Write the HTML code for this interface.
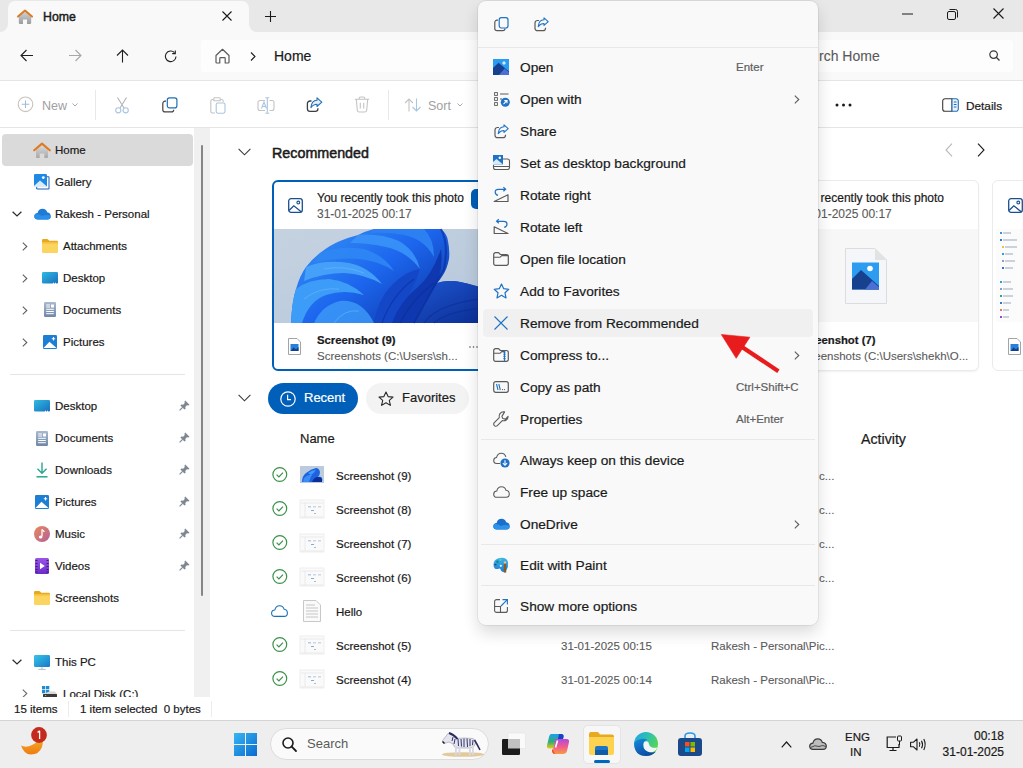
<!DOCTYPE html>
<html><head><meta charset="utf-8">
<style>
*{margin:0;padding:0;box-sizing:border-box}
html,body{width:1023px;height:768px;overflow:hidden;background:#fff;font-family:"Liberation Sans",sans-serif;color:#1a1a1a}
.a{position:absolute}
.t{position:absolute;white-space:nowrap;height:20px;line-height:20px;font-size:11.5px;-webkit-text-stroke:0.2px currentColor}
svg{position:absolute;overflow:visible}
</style></head><body>
<!-- title bar -->
<div class="a" style="left:0;top:0;width:1023px;height:32px;background:#e8e8e8"></div>
<div class="a" style="left:8px;top:1px;width:241px;height:32px;background:#f9f9f9;border-radius:7px 7px 0 0"></div>
<div class="a" style="left:249px;top:24px;width:8px;height:8px;background:#f9f9f9"></div>
<div class="a" style="left:249px;top:24px;width:8px;height:8px;background:#e8e8e8;border-bottom-left-radius:8px"></div>
<div class="a" style="left:0px;top:24px;width:8px;height:8px;background:#f9f9f9"></div>
<div class="a" style="left:0px;top:24px;width:8px;height:8px;background:#e8e8e8;border-bottom-right-radius:8px"></div>
<!-- address row -->
<div class="a" style="left:0;top:32px;width:1023px;height:48px;background:#f9f9f9"></div>
<div class="a" style="left:0;top:80px;width:1023px;height:1px;background:#e5e5e5"></div>
<div class="a" style="left:201px;top:40px;width:400px;height:32px;background:#fdfdfd;border-radius:4px"></div>
<div class="a" style="left:620px;top:40px;width:393px;height:32px;background:#fdfdfd;border-radius:4px"></div>
<!-- command bar -->
<div class="a" style="left:0;top:81px;width:1023px;height:46px;background:#fff"></div>
<div class="a" style="left:0;top:127px;width:1023px;height:1px;background:#e5e5e5"></div>
<!-- nav pane -->
<div class="a" style="left:2px;top:134px;width:191px;height:32px;background:#dadada;border-radius:4px"></div>
<div class="a" style="left:194px;top:128px;width:16px;height:569px;background:#f0f0f0"></div>
<div class="a" style="left:201px;top:145px;width:2px;height:451px;background:#868686;border-radius:1px"></div>
<div class="a" style="left:10px;top:374px;width:175px;height:1px;background:#e5e5e5"></div>
<div class="a" style="left:10px;top:630px;width:175px;height:1px;background:#e5e5e5"></div>


<!-- tab -->
<div class="t" style="left:43px;top:7px;font-size:12.3px;color:#1b1b1b;-webkit-text-stroke:0.45px #1b1b1b">Home</div>
<div class="t" style="left:274px;top:46px;font-size:14px">Home</div>
<div class="t" style="left:819px;top:46px;font-size:14px;color:#5a5a5a;-webkit-text-stroke:0.1px #5a5a5a">rch Home</div>
<!-- cmd bar -->
<div class="t" style="left:42px;top:96px;font-size:12.5px;color:#a0a0a0;-webkit-text-stroke:0">New</div>
<div class="t" style="left:428px;top:96px;font-size:12.5px;color:#a0a0a0;-webkit-text-stroke:0">Sort</div>
<div class="t" style="left:966px;top:96px;font-size:11.8px;color:#1a1a1a">Details</div>
<!-- nav -->
<div class="t" style="left:55px;top:140px">Home</div>
<div class="t" style="left:55px;top:172px">Gallery</div>
<div class="t" style="left:55px;top:204px">Rakesh - Personal</div>
<div class="t" style="left:63px;top:236px">Attachments</div>
<div class="t" style="left:63px;top:268px">Desktop</div>
<div class="t" style="left:63px;top:300px">Documents</div>
<div class="t" style="left:63px;top:332px">Pictures</div>
<div class="t" style="left:55px;top:396px">Desktop</div>
<div class="t" style="left:55px;top:428px">Documents</div>
<div class="t" style="left:55px;top:460px">Downloads</div>
<div class="t" style="left:55px;top:492px">Pictures</div>
<div class="t" style="left:55px;top:524px">Music</div>
<div class="t" style="left:55px;top:556px">Videos</div>
<div class="t" style="left:55px;top:588px">Screenshots</div>
<div class="t" style="left:55px;top:652px">This PC</div>
<!-- status -->
<!-- content -->
<svg style="left:238px;top:148px" width="13" height="8" viewBox="0 0 13 8"><path d="M0.6 0.8L6.5 6.8L12.4 0.8" fill="none" stroke="#3a3a3a" stroke-width="1.1"/></svg>
<svg style="left:945px;top:143px" width="8" height="14" viewBox="0 0 8 14"><path d="M7 0.6L1 7L7 13.4" fill="none" stroke="#b8b8b8" stroke-width="1.1"/></svg>
<svg style="left:977px;top:143px" width="8" height="14" viewBox="0 0 8 14"><path d="M1 0.6L7 7L1 13.4" fill="none" stroke="#1a1a1a" stroke-width="1.1"/></svg>
<!-- card 1 -->
<div class="a" style="left:272px;top:180px;width:227px;height:191px;border:2px solid #005fb8;border-radius:6px;background:#fff;overflow:hidden">
 <svg style="left:0;top:47px" width="225" height="94" viewBox="0 0 225 94">
  <defs><linearGradient id="bgw" x1="0" y1="0" x2="1" y2="1"><stop offset="0" stop-color="#c5d2e0"/><stop offset="1" stop-color="#b6c8dc"/></linearGradient>
  <linearGradient id="bl1" x1="0" y1="0" x2="1" y2="0.6"><stop offset="0" stop-color="#3a96f6"/><stop offset="0.5" stop-color="#1c66ee"/><stop offset="1" stop-color="#0a2f9c"/></linearGradient>
  <linearGradient id="bl3" x1="0" y1="0" x2="1" y2="1"><stop offset="0" stop-color="#1d55d0"/><stop offset="1" stop-color="#0a2a8e"/></linearGradient></defs>
  <rect width="225" height="94" fill="url(#bgw)"/>
  <path d="M17 94Q18 72 22 60Q26 46 32 38Q38 30 46 24Q56 16 66 12Q76 8 84 6Q92 2 100 0H167Q173 5 174 12Q176 22 175 30Q173 40 169 46Q166 51 163 54Q168 52 174 52Q184 52 191 54Q198 56 225 64V94Z" fill="url(#bl1)"/>
  <path d="M163 54Q150 70 140 94H225V64Q195 54 180 52Q170 52 163 54Z" fill="url(#bl3)"/>
  <path d="M22 60Q35 50 55 50Q75 52 90 66Q70 60 52 66Q35 72 28 94H17Q18 72 22 60Z" fill="#3c9cf8"/>
  <path d="M32 38Q50 30 75 34Q95 38 108 55Q90 45 70 44Q50 44 30 52Z" fill="#48a4fa" opacity="0.9"/>
  <path d="M46 24Q65 16 90 20Q110 26 120 42Q105 32 85 30Q65 28 40 34Z" fill="#2f86f4" opacity="0.9"/>
  <path d="M84 6Q105 4 125 12Q142 22 146 40Q132 22 112 18Q95 14 76 14Z" fill="#3a92f8" opacity="0.9"/>
  <path d="M100 0H150Q160 10 160 28Q150 10 130 6Q115 3 96 4Z" fill="#2c80f2"/>
  <path d="M40 94Q48 76 66 72Q88 70 100 94Z" fill="#3b98f7" opacity="0.85"/>
  <path d="M100 94Q104 70 118 56Q132 42 146 40Q140 60 128 76Q120 86 118 94Z" fill="#1446c8"/>
  <path d="M118 94Q126 72 144 58Q158 46 167 20Q170 45 158 62Q148 78 140 94Z" fill="#0f38b0"/>
  <path d="M167 0Q175 15 170 40Q160 58 140 94" fill="none" stroke="#0a2c98" stroke-width="2" opacity="0.6"/>
  <path d="M108 94Q118 66 140 50M126 94Q138 70 160 54M150 94Q165 72 225 68M160 94Q175 80 225 78" fill="none" stroke="#0a2a90" stroke-width="1.2" opacity="0.5"/>
  <path d="M60 94Q70 80 85 82M30 70Q45 58 65 60M50 40Q70 36 90 44" fill="none" stroke="#6ab8ff" stroke-width="1" opacity="0.6"/>
 </svg>
</div>
<svg style="left:288px;top:198px" width="15" height="15" viewBox="0 0 15 15"><rect x="0.7" y="0.7" width="13.6" height="13.6" rx="2.3" fill="none" stroke="#1a4f8f" stroke-width="1.3"/><path d="M1 12.5L5.8 7.8L13.5 14" fill="none" stroke="#1a4f8f" stroke-width="1.3"/><circle cx="10.3" cy="4.5" r="1.4" fill="none" stroke="#1a4f8f" stroke-width="1.1"/></svg>
<div class="t" style="left:317px;top:188px;font-size:12px">You recently took this photo</div>
<div class="t" style="left:317px;top:204px;font-size:12px;color:#5a5a5a;-webkit-text-stroke:0.1px #5a5a5a">31-01-2025 00:17</div>
<div class="a" style="left:471px;top:189px;width:14px;height:20px;background:#005fb8;border-radius:5px"></div>
<svg style="left:288px;top:338px" width="13" height="17" viewBox="0 0 13 17"><path d="M0.5 0.5H9L12.5 4V16.5H0.5Z" fill="#fff" stroke="#9a9a9a" stroke-width="0.9"/><rect x="2.5" y="6" width="8" height="7" fill="#2a7fd6"/><path d="M2.5 13L5.5 9.5L8 11.5L10.5 9V13Z" fill="#0f3f8f"/></svg>
<div class="t" style="left:317px;top:330px;font-size:11.3px;font-weight:bold">Screenshot (9)</div>
<div class="t" style="left:317px;top:346px;font-size:11.5px;color:#5a5a5a;-webkit-text-stroke:0.1px #5a5a5a">Screenshots (C:\Users\sh...</div>
<svg style="left:469px;top:346px" width="9" height="2" viewBox="0 0 9 2"><circle cx="1" cy="1" r="0.8" fill="#555"/><circle cx="4.5" cy="1" r="0.8" fill="#555"/><circle cx="8" cy="1" r="0.8" fill="#555"/></svg>
<!-- card 2 -->
<div class="a" style="left:752px;top:180px;width:227px;height:191px;border:1px solid #ebebeb;border-radius:6px;background:#fff;box-shadow:0 1px 2px rgba(0,0,0,0.06)"></div>
<div class="a" style="left:753px;top:229px;width:225px;height:93px;background:#f7f7f7"></div>
<svg style="left:845px;top:248px" width="42" height="56" viewBox="0 0 42 56"><path d="M0.5 0.5H30L41.5 12V55.5H0.5Z" fill="#f4f6f9" stroke="#dcdcdc" stroke-width="1"/><path d="M30 0.5V12H41.5Z" fill="#e2e2e2"/><rect x="7" y="14.5" width="27" height="27" fill="#2b9cf0"/><path d="M7 41.5V31L16 22L34 38V41.5Z" fill="#17408f"/><path d="M20 41.5L27 33L34 39V41.5Z" fill="#4b6fd4"/><circle cx="25" cy="20.5" r="2.8" fill="#fff"/></svg>
<div class="t" style="left:797px;top:188px;font-size:12px">You recently took this photo</div>
<div class="t" style="left:797px;top:204px;font-size:12px;color:#5a5a5a;-webkit-text-stroke:0.1px #5a5a5a">31-01-2025 00:17</div>
<div class="t" style="left:797px;top:330px;font-size:11.3px;font-weight:bold">Screenshot (7)</div>
<div class="t" style="left:797px;top:346px;font-size:11.5px;color:#5a5a5a;-webkit-text-stroke:0.1px #5a5a5a">Screenshots (C:\Users\shekh\O...</div>
<!-- card 3 -->
<div class="a" style="left:992px;top:180px;width:227px;height:191px;border:1px solid #ebebeb;border-radius:6px;background:#fff"></div>
<svg style="left:1008px;top:198px" width="15" height="15" viewBox="0 0 15 15"><rect x="0.7" y="0.7" width="13.6" height="13.6" rx="2.3" fill="none" stroke="#1a4f8f" stroke-width="1.3"/><path d="M1 12.5L5.8 7.8L13.5 14" fill="none" stroke="#1a4f8f" stroke-width="1.3"/><circle cx="10.3" cy="4.5" r="1.4" fill="none" stroke="#1a4f8f" stroke-width="1.1"/></svg>
<svg style="left:996px;top:229px" width="27" height="93" viewBox="0 0 27 93"><rect width="27" height="93" fill="#fbfbfb"/>
<g fill="#9ab"><rect x="4" y="3" width="2" height="2" fill="#3d8fd8"/><rect x="7" y="3.5" width="8" height="1" /><rect x="4" y="10" width="2" height="2" fill="#2a7ad0"/><rect x="7" y="10.5" width="14" height="1"/><rect x="6" y="17" width="2" height="2" fill="#f2c040"/><rect x="9" y="17.5" width="12" height="1"/><rect x="6" y="24" width="2" height="2" fill="#2aa0d8"/><rect x="9" y="24.5" width="8" height="1"/><rect x="6" y="31" width="2" height="2" fill="#8aa0c0"/><rect x="9" y="31.5" width="10" height="1"/><rect x="6" y="38" width="2" height="2" fill="#2a7ad0"/><rect x="9" y="38.5" width="8" height="1"/>
<rect x="4" y="52" width="2" height="2" fill="#2aa0d8"/><rect x="7" y="52.5" width="8" height="1"/><rect x="4" y="59" width="2" height="2" fill="#8aa0c0"/><rect x="7" y="59.5" width="10" height="1"/><rect x="4" y="66" width="2" height="2" fill="#2aa68f"/><rect x="7" y="66.5" width="10" height="1"/><rect x="4" y="73" width="2" height="2" fill="#2a7ad0"/><rect x="7" y="73.5" width="8" height="1"/><rect x="4" y="80" width="2" height="2" fill="#e07a60"/><rect x="7" y="80.5" width="6" height="1"/><rect x="4" y="87" width="2" height="2" fill="#8a4ae0"/><rect x="7" y="87.5" width="6" height="1"/></g></svg>
<svg style="left:1008px;top:338px" width="13" height="17" viewBox="0 0 13 17"><path d="M0.5 0.5H9L12.5 4V16.5H0.5Z" fill="#fff" stroke="#9a9a9a" stroke-width="0.9"/><rect x="2.5" y="6" width="8" height="7" fill="#2a7fd6"/><path d="M2.5 13L5.5 9.5L8 11.5L10.5 9V13Z" fill="#0f3f8f"/></svg>
<!-- pills -->
<svg style="left:238px;top:394px" width="13" height="8" viewBox="0 0 13 8"><path d="M0.6 0.8L6.5 6.8L12.4 0.8" fill="none" stroke="#3a3a3a" stroke-width="1.1"/></svg>
<div class="a" style="left:268px;top:383px;width:90px;height:31px;background:#005fb8;border-radius:16px"></div>
<svg style="left:280px;top:391px" width="16" height="16" viewBox="0 0 16 16"><circle cx="8" cy="8" r="7.2" fill="none" stroke="#fff" stroke-width="1.2"/><path d="M7.6 3.8V8.6H11" fill="none" stroke="#fff" stroke-width="1.2"/></svg>
<div class="t" style="left:304px;top:388px;font-size:13px;color:#fff">Recent</div>
<div class="a" style="left:366px;top:383px;width:103px;height:31px;background:#f3f3f3;border-radius:16px"></div>
<svg style="left:378px;top:391px" width="16" height="16" viewBox="0 0 16 16"><path d="M8 1L10.1 5.6L15 6.1L11.3 9.4L12.4 14.4L8 11.8L3.6 14.4L4.7 9.4L1 6.1L5.9 5.6Z" fill="none" stroke="#2a2a2a" stroke-width="1.1" stroke-linejoin="round"/></svg>
<div class="t" style="left:402px;top:388px;font-size:13px">Favorites</div>
<svg style="left:272px;top:467px" width="16" height="16" viewBox="0 0 16 16"><circle cx="7.8" cy="7.5" r="6.9" fill="none" stroke="#3a9148" stroke-width="1.2"/><path d="M4.6 7.6L6.9 9.9L11 5.6" fill="none" stroke="#3a9148" stroke-width="1.2"/></svg>
<svg style="left:300px;top:466px" width="24" height="17" viewBox="0 0 24 17"><rect width="24" height="17" fill="#bccbdc"/><path d="M2 16Q2 10 6 7Q11 3 16 2Q19 2 20 6Q20 9 18 11Q21 10 22 12Q23 15 21 16Z" fill="#1f62e0"/><path d="M4 12Q8 8 12 9Q10 12 9 16H3Z" fill="#3a8ef5"/><path d="M12 16Q14 11 18 11Q22 11 22 14V16Z" fill="#0a2e9a"/><path d="M8 7Q12 4 16 4Q14 7 11 9Z" fill="#3f9af8"/></svg>
<svg style="left:272px;top:501px" width="16" height="16" viewBox="0 0 16 16"><circle cx="7.8" cy="7.5" r="6.9" fill="none" stroke="#3a9148" stroke-width="1.2"/><path d="M4.6 7.6L6.9 9.9L11 5.6" fill="none" stroke="#3a9148" stroke-width="1.2"/></svg>
<svg style="left:300px;top:500px" width="24" height="18" viewBox="0 0 24 18"><rect width="24" height="18" fill="#fafafa" stroke="#eee"/><path d="M1 3H23M5 3V17M1 17H23" stroke="#e0e0e0" stroke-width="0.6"/><rect x="8" y="6" width="3" height="1.5" fill="#b8cde8"/><rect x="13" y="6" width="3" height="1.5" fill="#c8d8e8"/><rect x="18" y="6" width="3" height="1.5" fill="#c8d8e8"/><rect x="11" y="10" width="3" height="1" fill="#8aa8d0"/><rect x="14" y="13" width="2" height="1" fill="#aabbd0"/></svg>
<svg style="left:272px;top:535px" width="16" height="16" viewBox="0 0 16 16"><circle cx="7.8" cy="7.5" r="6.9" fill="none" stroke="#3a9148" stroke-width="1.2"/><path d="M4.6 7.6L6.9 9.9L11 5.6" fill="none" stroke="#3a9148" stroke-width="1.2"/></svg>
<svg style="left:300px;top:534px" width="24" height="18" viewBox="0 0 24 18"><rect width="24" height="18" fill="#fafafa" stroke="#eee"/><path d="M1 3H23M5 3V17M1 17H23" stroke="#e0e0e0" stroke-width="0.6"/><rect x="8" y="6" width="3" height="1.5" fill="#b8cde8"/><rect x="13" y="6" width="3" height="1.5" fill="#c8d8e8"/><rect x="18" y="6" width="3" height="1.5" fill="#c8d8e8"/><rect x="11" y="10" width="3" height="1" fill="#8aa8d0"/><rect x="14" y="13" width="2" height="1" fill="#aabbd0"/></svg>
<svg style="left:272px;top:569px" width="16" height="16" viewBox="0 0 16 16"><circle cx="7.8" cy="7.5" r="6.9" fill="none" stroke="#3a9148" stroke-width="1.2"/><path d="M4.6 7.6L6.9 9.9L11 5.6" fill="none" stroke="#3a9148" stroke-width="1.2"/></svg>
<svg style="left:300px;top:568px" width="24" height="18" viewBox="0 0 24 18"><rect width="24" height="18" fill="#fafafa" stroke="#eee"/><path d="M1 3H23M5 3V17M1 17H23" stroke="#e0e0e0" stroke-width="0.6"/><rect x="8" y="6" width="3" height="1.5" fill="#b8cde8"/><rect x="13" y="6" width="3" height="1.5" fill="#c8d8e8"/><rect x="18" y="6" width="3" height="1.5" fill="#c8d8e8"/><rect x="11" y="10" width="3" height="1" fill="#8aa8d0"/><rect x="14" y="13" width="2" height="1" fill="#aabbd0"/></svg>
<svg style="left:271px;top:605px" width="17" height="12" viewBox="0 0 17 12"><path d="M4 11.4Q0.6 11.4 0.6 8.2Q0.6 5.3 3.8 5Q4.7 0.7 8.6 0.7Q12.1 0.7 13.1 4.2Q16.4 4.7 16.4 8Q16.4 11.4 13.2 11.4Z" fill="none" stroke="#1f6fb5" stroke-width="1.1"/></svg>
<svg style="left:303px;top:600px" width="18" height="22" viewBox="0 0 18 22"><path d="M0.5 0.5H13L17.5 5V21.5H0.5Z" fill="#fafafa" stroke="#c8c8c8" stroke-width="1"/><path d="M3 5H12M3 8H15M3 11H15M3 14H15M3 17H15" stroke="#c6c6c6" stroke-width="1"/></svg>
<svg style="left:272px;top:637px" width="16" height="16" viewBox="0 0 16 16"><circle cx="7.8" cy="7.5" r="6.9" fill="none" stroke="#3a9148" stroke-width="1.2"/><path d="M4.6 7.6L6.9 9.9L11 5.6" fill="none" stroke="#3a9148" stroke-width="1.2"/></svg>
<svg style="left:300px;top:636px" width="24" height="18" viewBox="0 0 24 18"><rect width="24" height="18" fill="#fafafa" stroke="#eee"/><path d="M1 3H23M5 3V17M1 17H23" stroke="#e0e0e0" stroke-width="0.6"/><rect x="8" y="6" width="3" height="1.5" fill="#b8cde8"/><rect x="13" y="6" width="3" height="1.5" fill="#c8d8e8"/><rect x="18" y="6" width="3" height="1.5" fill="#c8d8e8"/><rect x="11" y="10" width="3" height="1" fill="#8aa8d0"/><rect x="14" y="13" width="2" height="1" fill="#aabbd0"/></svg>
<svg style="left:272px;top:671px" width="16" height="16" viewBox="0 0 16 16"><circle cx="7.8" cy="7.5" r="6.9" fill="none" stroke="#3a9148" stroke-width="1.2"/><path d="M4.6 7.6L6.9 9.9L11 5.6" fill="none" stroke="#3a9148" stroke-width="1.2"/></svg>
<svg style="left:300px;top:670px" width="24" height="18" viewBox="0 0 24 18"><rect width="24" height="18" fill="#fafafa" stroke="#eee"/><path d="M1 3H23M5 3V17M1 17H23" stroke="#e0e0e0" stroke-width="0.6"/><rect x="8" y="6" width="3" height="1.5" fill="#b8cde8"/><rect x="13" y="6" width="3" height="1.5" fill="#c8d8e8"/><rect x="18" y="6" width="3" height="1.5" fill="#c8d8e8"/><rect x="11" y="10" width="3" height="1" fill="#8aa8d0"/><rect x="14" y="13" width="2" height="1" fill="#aabbd0"/></svg>
<div class="t" style="left:819px;top:466px;color:#5a5a5a;-webkit-text-stroke:0.1px #5a5a5a">c...</div>
<div class="t" style="left:819px;top:500px;color:#5a5a5a;-webkit-text-stroke:0.1px #5a5a5a">c...</div>
<div class="t" style="left:819px;top:534px;color:#5a5a5a;-webkit-text-stroke:0.1px #5a5a5a">c...</div>
<div class="t" style="left:819px;top:568px;color:#5a5a5a;-webkit-text-stroke:0.1px #5a5a5a">c...</div>
<div class="t" style="left:272px;top:143px;font-size:14.3px;-webkit-text-stroke:0.5px #1a1a1a">Recommended</div>
<div class="t" style="left:300px;top:429px;font-size:13px">Name</div>
<div class="t" style="left:861px;top:429px;font-size:14.2px">Activity</div>
<div class="t" style="left:336px;top:466px">Screenshot (9)</div>
<div class="t" style="left:336px;top:500px">Screenshot (8)</div>
<div class="t" style="left:336px;top:534px">Screenshot (7)</div>
<div class="t" style="left:336px;top:568px">Screenshot (6)</div>
<div class="t" style="left:336px;top:602px">Hello</div>
<div class="t" style="left:336px;top:636px">Screenshot (5)</div>
<div class="t" style="left:336px;top:670px">Screenshot (4)</div>
<div class="t" style="left:561px;top:636px;color:#5a5a5a;-webkit-text-stroke:0.1px #5a5a5a">31-01-2025 00:15</div>
<div class="t" style="left:561px;top:670px;color:#5a5a5a;-webkit-text-stroke:0.1px #5a5a5a">31-01-2025 00:14</div>
<div class="t" style="left:711px;top:636px;color:#5a5a5a;-webkit-text-stroke:0.1px #5a5a5a">Rakesh - Personal\Pic...</div>
<div class="t" style="left:711px;top:670px;color:#5a5a5a;-webkit-text-stroke:0.1px #5a5a5a">Rakesh - Personal\Pic...</div>


<!-- title icons -->
<svg style="left:17px;top:9px" width="16" height="16" viewBox="0 0 16 16">
 <defs><linearGradient id="hg" x1="0" y1="0" x2="0" y2="1"><stop offset="0" stop-color="#cfd6dc"/><stop offset="1" stop-color="#9c9c9c"/></linearGradient></defs>
 <path d="M1.8 7L8 2L14.2 7V13.8Q14.2 15 13 15H10V10.5H6V15H3Q1.8 15 1.8 13.8Z" fill="url(#hg)"/>
 <path d="M1 7.6L8 1.6L15 7.6" fill="none" stroke="#e07a1f" stroke-width="2" stroke-linecap="round" stroke-linejoin="round"/>
</svg>
<svg style="left:222px;top:11px" width="10" height="10" viewBox="0 0 10 10"><path d="M0.5 0.5L9.5 9.5M9.5 0.5L0.5 9.5" stroke="#1a1a1a" stroke-width="1.1"/></svg>
<svg style="left:265px;top:11px" width="11" height="11" viewBox="0 0 11 11"><path d="M5.5 0V11M0 5.5H11" stroke="#1a1a1a" stroke-width="1.1"/></svg>
<svg style="left:902px;top:13px" width="11" height="2" viewBox="0 0 11 2"><path d="M0 1H11" stroke="#1a1a1a" stroke-width="1"/></svg>
<svg style="left:947px;top:9px" width="11" height="11" viewBox="0 0 11 11"><rect x="0.5" y="2.5" width="8" height="8" rx="1.5" fill="none" stroke="#1a1a1a"/><path d="M2.5 0.5H8.5A2 2 0 0 1 10.5 2.5V8.5" fill="none" stroke="#1a1a1a"/></svg>
<svg style="left:993px;top:8px" width="11" height="11" viewBox="0 0 11 11"><path d="M0.5 0.5L10.5 10.5M10.5 0.5L0.5 10.5" stroke="#1a1a1a" stroke-width="1.1"/></svg>
<!-- nav arrows -->
<svg style="left:20px;top:49px" width="14" height="13" viewBox="0 0 14 13"><path d="M13 6.5H1.2M6.5 1L1 6.5L6.5 12" fill="none" stroke="#1f1f1f" stroke-width="1.1"/></svg>
<svg style="left:68px;top:49px" width="14" height="13" viewBox="0 0 14 13"><path d="M1 6.5H12.8M7.5 1L13 6.5L7.5 12" fill="none" stroke="#a8a8a8" stroke-width="1.1"/></svg>
<svg style="left:116px;top:49px" width="13" height="14" viewBox="0 0 13 14"><path d="M6.5 13.5V1.2M1 6.5L6.5 1L12 6.5" fill="none" stroke="#1f1f1f" stroke-width="1.1"/></svg>
<svg style="left:164px;top:50px" width="14" height="13" viewBox="0 0 14 13"><path d="M12 6.5A5.3 5.3 0 1 1 10.5 2.6" fill="none" stroke="#1f1f1f" stroke-width="1.1"/><path d="M11.3 0.5V3.6H8.2" fill="none" stroke="#1f1f1f" stroke-width="1.1"/></svg>
<svg style="left:215px;top:48px" width="15" height="16" viewBox="0 0 15 16"><path d="M1 7.5L7.5 1.3L14 7.5V14.2Q14 15 13.2 15H10.2V10.5Q10.2 9.7 9.4 9.7H5.6Q4.8 9.7 4.8 10.5V15H1.8Q1 15 1 14.2Z" fill="none" stroke="#5a5a5a" stroke-width="1.2" stroke-linejoin="round"/></svg>
<svg style="left:250px;top:52px" width="6" height="9" viewBox="0 0 6 9"><path d="M1 0.5L5 4.5L1 8.5" fill="none" stroke="#1f1f1f" stroke-width="1.1"/></svg>
<svg style="left:989px;top:50px" width="11" height="11" viewBox="0 0 11 11"><circle cx="4.6" cy="4.6" r="3.8" fill="none" stroke="#3a3a3a" stroke-width="1.2"/><path d="M7.3 7.3L10.5 10.5" stroke="#3a3a3a" stroke-width="1.3"/></svg>


<!-- command bar icons -->
<svg style="left:17px;top:96px" width="17" height="17" viewBox="0 0 17 17"><circle cx="8.5" cy="8.3" r="7.3" fill="none" stroke="#c9c2bb" stroke-width="1.1"/><path d="M8.5 4.5V12.1M4.7 8.3H12.3" stroke="#9fbbd6" stroke-width="1.1"/></svg>
<svg style="left:72px;top:103px" width="6" height="4" viewBox="0 0 6 4"><path d="M0.5 0.5L3 3L5.5 0.5" fill="none" stroke="#a0a0a0" stroke-width="0.9"/></svg>
<div class="a" style="left:95px;top:90px;width:1px;height:30px;background:#e8e8e8"></div>
<svg style="left:114px;top:97px" width="16" height="17" viewBox="0 0 16 17"><path d="M3.5 0.5L10 11M12.5 0.5L6 11" stroke="#b3b3b3" stroke-width="1.1"/><circle cx="4.3" cy="13.3" r="2.6" fill="#fff" stroke="#a9c5e0" stroke-width="1.1"/><circle cx="11.7" cy="13.3" r="2.6" fill="#fff" stroke="#a9c5e0" stroke-width="1.1"/></svg>
<svg style="left:162px;top:97px" width="16" height="16" viewBox="0 0 16 16"><path d="M4 4.2H3A2.2 2.2 0 0 0 0.8 6.4V12.7A2.2 2.2 0 0 0 3 14.9H9.5A2.2 2.2 0 0 0 11.7 12.7" fill="none" stroke="#424242" stroke-width="1.2"/><rect x="5.3" y="0.9" width="9.6" height="10" rx="2.2" fill="#fff" stroke="#1f6fb5" stroke-width="1.2"/></svg>
<svg style="left:210px;top:97px" width="16" height="17" viewBox="0 0 16 17"><path d="M3.5 2.5H2.5A1.7 1.7 0 0 0 0.8 4.2V14.3A1.7 1.7 0 0 0 2.5 16H5" fill="none" stroke="#c4c4c4" stroke-width="1.1"/><path d="M3.8 3.8V1.6Q3.8 0.8 4.6 0.8H9.4Q10.2 0.8 10.2 1.6V3.8Z" fill="none" stroke="#c4c4c4" stroke-width="1.1"/><path d="M10.5 2.5H11.5A1.7 1.7 0 0 1 13.2 4.2V5" fill="none" stroke="#c4c4c4" stroke-width="1.1"/><rect x="6.2" y="6" width="8.8" height="10.2" rx="1.6" fill="#fff" stroke="#a9c5e0" stroke-width="1.1"/></svg>
<svg style="left:257px;top:97px" width="18" height="17" viewBox="0 0 18 17"><path d="M8 3.5H3A2 2 0 0 0 1 5.5V11.5A2 2 0 0 0 3 13.5H8M12.5 3.5H15A2 2 0 0 1 17 5.5V11.5A2 2 0 0 1 15 13.5H12.5" fill="none" stroke="#c4c4c4" stroke-width="1.1"/><path d="M4.5 11.5L7 5L9.5 11.5M5.3 9.5H8.7" fill="none" stroke="#a9c5e0" stroke-width="1.1"/><path d="M10.3 0.8V16.2M8.3 0.8H12.3M8.3 16.2H12.3" fill="none" stroke="#a9c5e0" stroke-width="1.1"/></svg>
<svg style="left:306px;top:97px" width="17" height="16" viewBox="0 0 17 16"><path d="M5.5 4H4A2.6 2.6 0 0 0 1.4 6.6V11.8A2.6 2.6 0 0 0 4 14.4H9.3A2.6 2.6 0 0 0 11.9 11.8V11.2" fill="none" stroke="#3f3f3f" stroke-width="1.3"/><path d="M11 0.9L15.8 5.2L11 9.5V7.3Q7.2 7.3 4.9 10.6Q5.6 3.2 11 3.2Z" fill="#e4eefa" stroke="#1f6fb5" stroke-width="1.1" stroke-linejoin="round"/></svg>
<svg style="left:354px;top:96px" width="16" height="17" viewBox="0 0 16 17"><path d="M0.8 3.3H15.2M5.3 3.3V2.2Q5.3 1 6.5 1H9.5Q10.7 1 10.7 2.2V3.3M2.3 3.3L3.3 14.2Q3.5 16 5.3 16H10.7Q12.5 16 12.7 14.2L13.7 3.3M6.3 6.8V12.5M9.7 6.8V12.5" fill="none" stroke="#c4c4c4" stroke-width="1.1"/></svg>
<div class="a" style="left:388px;top:90px;width:1px;height:30px;background:#e8e8e8"></div>
<svg style="left:404px;top:98px" width="18" height="14" viewBox="0 0 18 14"><path d="M5 13.5V1M1 5L5 1L9 5" fill="none" stroke="#c4c4c4" stroke-width="1.1"/><path d="M12.5 0.5V13M8.5 9L12.5 13L16.5 9" fill="none" stroke="#a9c5e0" stroke-width="1.1"/></svg>
<svg style="left:457px;top:103px" width="6" height="4" viewBox="0 0 6 4"><path d="M0.5 0.5L3 3L5.5 0.5" fill="none" stroke="#a0a0a0" stroke-width="0.9"/></svg>
<svg style="left:835px;top:103px" width="17" height="4" viewBox="0 0 17 4"><circle cx="2" cy="2" r="1.5" fill="#1a1a1a"/><circle cx="8.5" cy="2" r="1.5" fill="#1a1a1a"/><circle cx="15" cy="2" r="1.5" fill="#1a1a1a"/></svg>
<svg style="left:942px;top:98px" width="17" height="14" viewBox="0 0 17 14"><path d="M10 0.7H3A2.3 2.3 0 0 0 0.7 3V11A2.3 2.3 0 0 0 3 13.3H10Z" fill="none" stroke="#3a3a3a" stroke-width="1.1"/><path d="M10 0.7H14A2.3 2.3 0 0 1 16.3 3V11A2.3 2.3 0 0 1 14 13.3H10Z" fill="#eaf2fb" stroke="#1f6fb5" stroke-width="1.1"/><path d="M11.8 4H14.5M11.8 6.5H14.5M11.8 9H14.5" stroke="#1f6fb5" stroke-width="1"/></svg>

<!-- nav icons -->
<svg style="left:33px;top:142px" width="18" height="17" viewBox="0 0 18 17"><defs><linearGradient id="hg2" x1="0" y1="0" x2="0" y2="1"><stop offset="0" stop-color="#dcdcdc"/><stop offset="1" stop-color="#a8a8a8"/></linearGradient></defs><path d="M3 7.5L9 2.5L15 7.5V15.2Q15 16 14.2 16H11.3V11.5H6.7V16H3.8Q3 16 3 15.2Z" fill="url(#hg2)"/><path d="M1.2 8.3L9 1.6L16.8 8.3" fill="none" stroke="#e07a20" stroke-width="2.1" stroke-linecap="round" stroke-linejoin="round"/></svg>
<svg style="left:34px;top:174px" width="16" height="16" viewBox="0 0 16 16"><rect x="2.2" y="2.2" width="13.3" height="13.3" rx="1.2" fill="#1b5fb0"/><rect x="3.2" y="3.2" width="11.3" height="11.3" fill="#fff"/><rect x="0" y="0" width="13" height="13" rx="1.3" fill="#1e88e5"/><path d="M0 12L6 6.5L13 12.5V13H0Z" fill="#d9ecfb"/><circle cx="9.3" cy="3.6" r="1.4" fill="#fff"/></svg>
<svg style="left:12px;top:211px" width="10" height="6" viewBox="0 0 10 6"><path d="M0.6 0.8L5 5L9.4 0.8" fill="none" stroke="#2a2a2a" stroke-width="1.2"/></svg>
<svg style="left:34px;top:208px" width="17" height="12" viewBox="0 0 17 12"><path d="M4 11.5Q0.3 11.5 0.3 8.3Q0.3 5.3 3.6 5Q4.6 0.8 8.6 0.8Q12.2 0.8 13.2 4.3Q16.7 4.8 16.7 8.2Q16.7 11.5 13.3 11.5Z" fill="#1d7bd6"/><path d="M4 11.5Q0.3 11.5 0.3 8.3Q0.3 6.8 1.5 6Q5 5.5 8 8Q11 6.5 16.5 7.5Q16.7 8 16.7 8.2Q16.7 11.5 13.3 11.5Z" fill="#2b8ee8"/></svg>
<svg style="left:22px;top:242px" width="6" height="9" viewBox="0 0 6 9"><path d="M0.8 0.6L4.8 4.5L0.8 8.4" fill="none" stroke="#5f5f5f" stroke-width="1.1"/></svg>
<svg style="left:22px;top:274px" width="6" height="9" viewBox="0 0 6 9"><path d="M0.8 0.6L4.8 4.5L0.8 8.4" fill="none" stroke="#5f5f5f" stroke-width="1.1"/></svg>
<svg style="left:22px;top:306px" width="6" height="9" viewBox="0 0 6 9"><path d="M0.8 0.6L4.8 4.5L0.8 8.4" fill="none" stroke="#5f5f5f" stroke-width="1.1"/></svg>
<svg style="left:22px;top:338px" width="6" height="9" viewBox="0 0 6 9"><path d="M0.8 0.6L4.8 4.5L0.8 8.4" fill="none" stroke="#5f5f5f" stroke-width="1.1"/></svg>
<svg style="left:42px;top:239px" width="16" height="14" viewBox="0 0 16 14"><path d="M0 1.2Q0 0 1.2 0H5.5L7.3 1.8H14.8Q16 1.8 16 3V4H0Z" fill="#e8a820"/><path d="M0 3.6H16V12.8Q16 14 14.8 14H1.2Q0 14 0 12.8Z" fill="#fcd460"/><path d="M0 3.6H16V5H0Z" fill="#f8c744"/></svg>
<svg style="left:42px;top:272px" width="16" height="12" viewBox="0 0 16 12"><defs><linearGradient id="dg272" x1="0" y1="0" x2="1" y2="1"><stop offset="0" stop-color="#2ebbe0"/><stop offset="1" stop-color="#1a6fc0"/></linearGradient></defs><rect x="0" y="0" width="16" height="11.5" rx="1.3" fill="url(#dg272)"/><rect x="11" y="10.7" width="1" height="1.3" fill="#fff"/><rect x="13" y="10.7" width="1" height="1.3" fill="#fff"/></svg>
<svg style="left:44px;top:302px" width="12" height="15" viewBox="0 0 12 15"><defs><linearGradient id="og302" x1="0" y1="0" x2="0" y2="1"><stop offset="0" stop-color="#a9b9d0"/><stop offset="1" stop-color="#6f87a8"/></linearGradient></defs><rect x="0" y="0" width="12" height="15" rx="1.3" fill="url(#og302)"/><path d="M2.2 3H6M2.2 5H6M2.2 7.3H9.8M2.2 9.5H9.8M2.2 11.7H9.8" stroke="#fff" stroke-width="1"/><rect x="7" y="2.5" width="3" height="3" fill="#fff"/></svg>
<svg style="left:43px;top:335px" width="14" height="14" viewBox="0 0 14 14"><rect x="0" y="0" width="14" height="14" rx="1.3" fill="#1d7fd4"/><path d="M0.5 13L6.5 6.8L13.5 13Z" fill="#fff"/><path d="M10.5 2V5.4M8.8 3.7H12.2" stroke="#fff" stroke-width="1.1"/></svg>
<svg style="left:34px;top:400px" width="16" height="12" viewBox="0 0 16 12"><defs><linearGradient id="dg400" x1="0" y1="0" x2="1" y2="1"><stop offset="0" stop-color="#2ebbe0"/><stop offset="1" stop-color="#1a6fc0"/></linearGradient></defs><rect x="0" y="0" width="16" height="11.5" rx="1.3" fill="url(#dg400)"/><rect x="11" y="10.7" width="1" height="1.3" fill="#fff"/><rect x="13" y="10.7" width="1" height="1.3" fill="#fff"/></svg>
<svg style="left:36px;top:431px" width="12" height="15" viewBox="0 0 12 15"><defs><linearGradient id="og431" x1="0" y1="0" x2="0" y2="1"><stop offset="0" stop-color="#a9b9d0"/><stop offset="1" stop-color="#6f87a8"/></linearGradient></defs><rect x="0" y="0" width="12" height="15" rx="1.3" fill="url(#og431)"/><path d="M2.2 3H6M2.2 5H6M2.2 7.3H9.8M2.2 9.5H9.8M2.2 11.7H9.8" stroke="#fff" stroke-width="1"/><rect x="7" y="2.5" width="3" height="3" fill="#fff"/></svg>
<svg style="left:36px;top:462px" width="12" height="16" viewBox="0 0 12 16"><path d="M6 0.5V11M1.5 6.7L6 11.2L10.5 6.7" fill="none" stroke="#2aa68f" stroke-width="1.4"/><path d="M0.5 14.8H11.5" stroke="#2aa68f" stroke-width="1.5"/></svg>
<svg style="left:35px;top:495px" width="14" height="14" viewBox="0 0 14 14"><rect x="0" y="0" width="14" height="14" rx="1.3" fill="#1d7fd4"/><path d="M0.5 13L6.5 6.8L13.5 13Z" fill="#fff"/><path d="M10.5 2V5.4M8.8 3.7H12.2" stroke="#fff" stroke-width="1.1"/></svg>
<svg style="left:34px;top:526px" width="16" height="16" viewBox="0 0 16 16"><defs><linearGradient id="mg" x1="0" y1="0" x2="1" y2="1"><stop offset="0" stop-color="#e98a5a"/><stop offset="1" stop-color="#b45e9a"/></linearGradient></defs><circle cx="8" cy="8" r="8" fill="url(#mg)"/><path d="M8 3.5V10.6" stroke="#fff" stroke-width="1.3"/><ellipse cx="6.6" cy="10.9" rx="1.8" ry="1.5" fill="#fff"/><path d="M8 3.5Q9.5 4.5 10.3 6" fill="none" stroke="#fff" stroke-width="1.2"/></svg>
<svg style="left:35px;top:558px" width="14" height="16" viewBox="0 0 14 16"><defs><linearGradient id="vg" x1="0" y1="0" x2="0" y2="1"><stop offset="0" stop-color="#9a55e6"/><stop offset="1" stop-color="#6a2cc8"/></linearGradient></defs><rect x="0" y="0" width="14" height="16" rx="1.5" fill="url(#vg)"/><path d="M0.5 2.5H2.5M0.5 5.5H2.5M0.5 8.5H2.5M0.5 11.5H2.5M0.5 14H2.5M11.5 2.5H13.5M11.5 5.5H13.5M11.5 8.5H13.5M11.5 11.5H13.5M11.5 14H13.5" stroke="#3b1a7a" stroke-width="1.2"/><path d="M5 4.8L9.8 8L5 11.2Z" fill="#fff"/></svg>
<svg style="left:34px;top:591px" width="16" height="14" viewBox="0 0 16 14"><path d="M0 1.2Q0 0 1.2 0H5.5L7.3 1.8H14.8Q16 1.8 16 3V4H0Z" fill="#e8a820"/><path d="M0 3.6H16V12.8Q16 14 14.8 14H1.2Q0 14 0 12.8Z" fill="#fcd460"/><path d="M0 3.6H16V5H0Z" fill="#f8c744"/></svg>
<svg style="left:179px;top:400px" width="11" height="11" viewBox="0 0 11 11"><path d="M6.2 0.5L10.5 4.8L9.3 5.6L7.9 5.2L6.3 6.9L6.6 8.8L5.5 9.6L1.4 5.5L2.2 4.4L4.1 4.7L5.8 3.1L5.4 1.7Z" fill="#7c8794"/><path d="M3.6 7.4L0.6 10.4" stroke="#7c8794" stroke-width="1.2"/></svg>
<svg style="left:179px;top:432px" width="11" height="11" viewBox="0 0 11 11"><path d="M6.2 0.5L10.5 4.8L9.3 5.6L7.9 5.2L6.3 6.9L6.6 8.8L5.5 9.6L1.4 5.5L2.2 4.4L4.1 4.7L5.8 3.1L5.4 1.7Z" fill="#7c8794"/><path d="M3.6 7.4L0.6 10.4" stroke="#7c8794" stroke-width="1.2"/></svg>
<svg style="left:179px;top:464px" width="11" height="11" viewBox="0 0 11 11"><path d="M6.2 0.5L10.5 4.8L9.3 5.6L7.9 5.2L6.3 6.9L6.6 8.8L5.5 9.6L1.4 5.5L2.2 4.4L4.1 4.7L5.8 3.1L5.4 1.7Z" fill="#7c8794"/><path d="M3.6 7.4L0.6 10.4" stroke="#7c8794" stroke-width="1.2"/></svg>
<svg style="left:179px;top:496px" width="11" height="11" viewBox="0 0 11 11"><path d="M6.2 0.5L10.5 4.8L9.3 5.6L7.9 5.2L6.3 6.9L6.6 8.8L5.5 9.6L1.4 5.5L2.2 4.4L4.1 4.7L5.8 3.1L5.4 1.7Z" fill="#7c8794"/><path d="M3.6 7.4L0.6 10.4" stroke="#7c8794" stroke-width="1.2"/></svg>
<svg style="left:179px;top:528px" width="11" height="11" viewBox="0 0 11 11"><path d="M6.2 0.5L10.5 4.8L9.3 5.6L7.9 5.2L6.3 6.9L6.6 8.8L5.5 9.6L1.4 5.5L2.2 4.4L4.1 4.7L5.8 3.1L5.4 1.7Z" fill="#7c8794"/><path d="M3.6 7.4L0.6 10.4" stroke="#7c8794" stroke-width="1.2"/></svg>
<svg style="left:179px;top:560px" width="11" height="11" viewBox="0 0 11 11"><path d="M6.2 0.5L10.5 4.8L9.3 5.6L7.9 5.2L6.3 6.9L6.6 8.8L5.5 9.6L1.4 5.5L2.2 4.4L4.1 4.7L5.8 3.1L5.4 1.7Z" fill="#7c8794"/><path d="M3.6 7.4L0.6 10.4" stroke="#7c8794" stroke-width="1.2"/></svg>
<svg style="left:12px;top:659px" width="10" height="6" viewBox="0 0 10 6"><path d="M0.6 0.8L5 5L9.4 0.8" fill="none" stroke="#2a2a2a" stroke-width="1.2"/></svg>
<svg style="left:34px;top:655px" width="16" height="15" viewBox="0 0 16 15"><defs><linearGradient id="pcg" x1="0" y1="0" x2="1" y2="1"><stop offset="0" stop-color="#36c6e6"/><stop offset="1" stop-color="#1878c8"/></linearGradient></defs><rect x="0" y="0" width="16" height="12" rx="1.3" fill="url(#pcg)"/><path d="M8 12V14.2M4.3 14.4H11.7" stroke="#a8b4c0" stroke-width="0.9"/></svg>
<svg style="left:22px;top:689px" width="6" height="9" viewBox="0 0 6 9"><path d="M0.8 0.6L4.8 4.5L0.8 8.4" fill="none" stroke="#6a6a6a" stroke-width="1.1"/></svg>
<svg style="left:42px;top:686px" width="16" height="11" viewBox="0 0 16 11"><rect x="0" y="0" width="3.3" height="3.3" fill="#1f8ad6"/><rect x="4" y="0" width="3.3" height="3.3" fill="#1f8ad6"/><rect x="0" y="4" width="3.3" height="3.3" fill="#1f8ad6"/><rect x="4" y="4" width="3.3" height="3.3" fill="#1f8ad6"/><path d="M7.5 5.5H13L15 8H1Z" fill="#d8d8d8"/><rect x="1" y="8" width="14" height="3" rx="0.5" fill="#3a3a3a"/><rect x="3" y="9" width="1.2" height="1" fill="#6cd46c"/></svg>
<div class="t" style="left:63px;top:684px">Local Disk (C:)</div>

<!-- context menu -->
<div class="a" style="left:478px;top:1px;width:340px;height:624px;background:#f9f9f9;border-radius:8px;box-shadow:0 0 0 1px rgba(0,0,0,0.06),0 8px 16px rgba(0,0,0,0.14)"></div>
<div class="a" style="left:478px;top:47px;width:340px;height:1px;background:#e8e8e8"></div>
<div class="a" style="left:481px;top:439px;width:334px;height:1px;background:#e8e8e8"></div>
<div class="a" style="left:481px;top:544px;width:334px;height:1px;background:#e8e8e8"></div>
<div class="a" style="left:481px;top:585px;width:334px;height:1px;background:#e8e8e8"></div>
<div class="a" style="left:483px;top:309px;width:330px;height:28px;background:#f0f0f0;border-radius:4px"></div>
<div class="t" style="left:520px;top:58px;font-size:13.7px">Open</div>
<div class="t" style="left:520px;top:90px;font-size:13.7px">Open with</div>
<div class="t" style="left:520px;top:122px;font-size:13.7px">Share</div>
<div class="t" style="left:520px;top:154px;font-size:13.7px">Set as desktop background</div>
<div class="t" style="left:520px;top:186px;font-size:13.7px">Rotate right</div>
<div class="t" style="left:520px;top:218px;font-size:13.7px">Rotate left</div>
<div class="t" style="left:520px;top:250px;font-size:13.7px">Open file location</div>
<div class="t" style="left:520px;top:282px;font-size:13.7px">Add to Favorites</div>
<div class="t" style="left:520px;top:314px;font-size:13.7px">Remove from Recommended</div>
<div class="t" style="left:520px;top:346px;font-size:13.7px">Compress to...</div>
<div class="t" style="left:520px;top:378px;font-size:13.7px">Copy as path</div>
<div class="t" style="left:520px;top:410px;font-size:13.7px">Properties</div>
<div class="t" style="left:520px;top:451px;font-size:13.7px">Always keep on this device</div>
<div class="t" style="left:520px;top:483px;font-size:13.7px">Free up space</div>
<div class="t" style="left:520px;top:515px;font-size:13.7px">OneDrive</div>
<div class="t" style="left:520px;top:556px;font-size:13.7px">Edit with Paint</div>
<div class="t" style="left:520px;top:597px;font-size:13.7px">Show more options</div>
<div class="t" style="left:736px;top:57px;font-size:11.5px;color:#5f5f5f">Enter</div>
<div class="t" style="left:736px;top:377px;font-size:11.5px;color:#5f5f5f">Ctrl+Shift+C</div>
<div class="t" style="left:736px;top:409px;font-size:11.5px;color:#5f5f5f">Alt+Enter</div>
<svg style="left:794px;top:95px" width="6" height="9" viewBox="0 0 6 9"><path d="M0.8 0.6L4.8 4.5L0.8 8.4" fill="none" stroke="#5a5a5a" stroke-width="1.1"/></svg>
<svg style="left:794px;top:351px" width="6" height="9" viewBox="0 0 6 9"><path d="M0.8 0.6L4.8 4.5L0.8 8.4" fill="none" stroke="#5a5a5a" stroke-width="1.1"/></svg>
<svg style="left:794px;top:520px" width="6" height="9" viewBox="0 0 6 9"><path d="M0.8 0.6L4.8 4.5L0.8 8.4" fill="none" stroke="#5a5a5a" stroke-width="1.1"/></svg>
<svg style="left:494px;top:17px" width="15" height="14" viewBox="0 0 15 14"><path d="M4 3.2H3A2.2 2.2 0 0 0 0.8 5.4V11.5A2.2 2.2 0 0 0 3 13.7H8.8A2.2 2.2 0 0 0 11 11.5" fill="none" stroke="#5a5a5a" stroke-width="1.2"/><rect x="5.2" y="0.7" width="8.8" height="10.3" rx="2.2" fill="none" stroke="#1f72c4" stroke-width="1.2"/></svg>
<svg style="left:534px;top:17px" width="15" height="14" viewBox="0 0 15 14"><path d="M5 3.5H3.5A2.5 2.5 0 0 0 1 6V11.2A2.5 2.5 0 0 0 3.5 13.7H9A2.5 2.5 0 0 0 11.5 11.2V10.8" fill="none" stroke="#5a5a5a" stroke-width="1.2"/><path d="M10 0.8L14.2 4.6L10 8.4V6.5Q6.6 6.5 4.2 9.6Q4.9 2.8 10 2.8Z" fill="none" stroke="#1f72c4" stroke-width="1.1" stroke-linejoin="round"/></svg>
<svg style="left:493px;top:59px" width="16" height="16" viewBox="0 0 16 16"><rect width="16" height="16" fill="#2b9cf0"/><path d="M0 16V9L5.5 3.8L16 12.5V16Z" fill="#17408f"/><path d="M6 16L11.5 9.5L16 13.2V16Z" fill="#4b6fd4"/><path d="M11 2.2V5.8M9.2 4H12.8" stroke="#fff" stroke-width="1.1"/></svg>
<svg style="left:494px;top:92px" width="16" height="15" viewBox="0 0 16 15"><rect x="0.6" y="0.6" width="2.8" height="2.8" fill="none" stroke="#5a5a5a" stroke-width="0.9"/><rect x="0.6" y="5.6" width="2.8" height="2.8" fill="none" stroke="#5a5a5a" stroke-width="0.9"/><rect x="0.6" y="10.6" width="2.8" height="2.8" fill="none" stroke="#5a5a5a" stroke-width="0.9"/><path d="M6 2H14.5M6 7H8" stroke="#5a5a5a" stroke-width="1"/><circle cx="11.3" cy="10.3" r="4.5" fill="#1f72c4"/><path d="M9.5 12.1L12.9 8.7M10.3 8.6H13V11.3" fill="none" stroke="#fff" stroke-width="1.1"/></svg>
<svg style="left:494px;top:124px" width="16" height="14" viewBox="0 0 16 14"><path d="M5 3.5H3.5A2.5 2.5 0 0 0 1 6V11.2A2.5 2.5 0 0 0 3.5 13.7H9A2.5 2.5 0 0 0 11.5 11.2V10.8" fill="none" stroke="#5a5a5a" stroke-width="1.2"/><path d="M10 0.8L14.2 4.6L10 8.4V6.5Q6.6 6.5 4.2 9.6Q4.9 2.8 10 2.8Z" fill="none" stroke="#1f72c4" stroke-width="1.1" stroke-linejoin="round"/></svg>
<svg style="left:493px;top:155px" width="17" height="15" viewBox="0 0 17 15"><path d="M10 4H14.5A2 2 0 0 1 16.5 6V12.5A2 2 0 0 1 14.5 14.5H2.5A2 2 0 0 1 0.5 12.5V10" fill="none" stroke="#5a5a5a" stroke-width="1.1"/><path d="M0.5 11.5H16.5" stroke="#5a5a5a" stroke-width="1"/><rect x="0" y="0" width="10" height="9.5" fill="#1f72c4"/><path d="M0 9.5V7L3.5 4L10 9.5Z" fill="#d6eafc"/><circle cx="6.8" cy="2.8" r="1.2" fill="#fff"/></svg>
<svg style="left:493px;top:187px" width="16" height="16" viewBox="0 0 16 16"><path d="M1.2 14.5H15V7.8Z" fill="none" stroke="#5a5a5a" stroke-width="1.2" stroke-linejoin="round"/><path d="M12.5 2.3H5.5Q2.2 2.3 2.2 5Q2.2 7.6 5 8.4" fill="none" stroke="#1f72c4" stroke-width="1.2"/><path d="M10.4 0.3L12.6 2.3L10.4 4.3" fill="none" stroke="#1f72c4" stroke-width="1.2"/></svg>
<svg style="left:493px;top:219px" width="16" height="16" viewBox="0 0 16 16"><path d="M15 14.5H1.2V7.8Z" fill="none" stroke="#5a5a5a" stroke-width="1.2" stroke-linejoin="round"/><path d="M3.7 2.3H10.7Q14 2.3 14 5Q14 7.6 11.2 8.4" fill="none" stroke="#1f72c4" stroke-width="1.2"/><path d="M5.8 0.3L3.6 2.3L5.8 4.3" fill="none" stroke="#1f72c4" stroke-width="1.2"/></svg>
<svg style="left:493px;top:252px" width="16" height="14" viewBox="0 0 16 14"><path d="M0.7 2.5A1.8 1.8 0 0 1 2.5 0.7H5.5L7.3 2.5H13.5A1.8 1.8 0 0 1 15.3 4.3V11.5A1.8 1.8 0 0 1 13.5 13.3H2.5A1.8 1.8 0 0 1 0.7 11.5Z" fill="none" stroke="#5a5a5a" stroke-width="1.2"/><path d="M0.7 5.3H7L8.8 3.6H15.3" fill="none" stroke="#5a5a5a" stroke-width="1.1"/></svg>
<svg style="left:493px;top:283px" width="17" height="16" viewBox="0 0 17 16"><path d="M8.5 1L10.7 5.7L15.8 6.3L12 9.8L13 14.9L8.5 12.3L4 14.9L5 9.8L1.2 6.3L6.3 5.7Z" fill="none" stroke="#1f72c4" stroke-width="1.2" stroke-linejoin="round"/></svg>
<svg style="left:494px;top:316px" width="14" height="14" viewBox="0 0 14 14"><path d="M0.5 0.5L13.5 13.5M13.5 0.5L0.5 13.5" stroke="#1f72c4" stroke-width="1.1"/></svg>
<svg style="left:493px;top:348px" width="16" height="14" viewBox="0 0 16 14"><path d="M0.7 2.5A1.8 1.8 0 0 1 2.5 0.7H5.5L7.3 2.5H13.5A1.8 1.8 0 0 1 15.3 4.3V11.5A1.8 1.8 0 0 1 13.5 13.3H2.5A1.8 1.8 0 0 1 0.7 11.5Z" fill="none" stroke="#5a5a5a" stroke-width="1.2"/><path d="M0.7 5.3H7L8.8 3.6H11" fill="none" stroke="#5a5a5a" stroke-width="1.1"/><path d="M11.5 2.5V13.3" stroke="#1f72c4" stroke-width="1.2"/><path d="M10.3 4H12.7M10.3 6.2H12.7M10.3 8.4H12.7M10.3 10.6H12.7" stroke="#1f72c4" stroke-width="0.9"/></svg>
<svg style="left:493px;top:381px" width="16" height="12" viewBox="0 0 16 12"><rect x="0.7" y="0.7" width="14.6" height="10.6" rx="2" fill="none" stroke="#5a5a5a" stroke-width="1.2"/><path d="M3.5 3L5 9M5.8 3L7.3 9" stroke="#1f72c4" stroke-width="1.1"/><circle cx="9.5" cy="8.6" r="0.6" fill="#5a5a5a"/><circle cx="11.5" cy="8.6" r="0.6" fill="#5a5a5a"/></svg>
<svg style="left:493px;top:411px" width="16" height="16" viewBox="0 0 16 16"><path d="M10.5 0.8A4.5 4.5 0 0 0 6.3 6.6L1.3 11.6A2.1 2.1 0 0 0 4.3 14.6L9.3 9.6A4.5 4.5 0 0 0 15.1 5.4L12.4 8.1L9.8 7.5L8.9 5.4L11.6 0.9Z" fill="none" stroke="#5a5a5a" stroke-width="1.1" stroke-linejoin="round"/></svg>
<svg style="left:493px;top:452px" width="17" height="16" viewBox="0 0 17 16"><path d="M7 11.5H3.8Q0.7 11.5 0.7 8.5Q0.7 5.8 3.5 5.5Q4.5 1.2 8.3 1.2Q11.8 1.2 12.8 4.8" fill="none" stroke="#5a5a5a" stroke-width="1.1"/><circle cx="12" cy="11" r="4.6" fill="#1f72c4"/><path d="M12 8.3V13.2M9.9 11.2L12 13.3L14.1 11.2" fill="none" stroke="#fff" stroke-width="1.1"/></svg>
<svg style="left:493px;top:486px" width="17" height="12" viewBox="0 0 17 12"><path d="M4 11.3Q0.7 11.3 0.7 8.2Q0.7 5.3 3.8 5Q4.7 0.8 8.5 0.8Q12 0.8 13 4.3Q16.3 4.8 16.3 8Q16.3 11.3 13.2 11.3Z" fill="none" stroke="#5a5a5a" stroke-width="1.1"/></svg>
<svg style="left:493px;top:518px" width="17" height="12" viewBox="0 0 17 12"><path d="M4 11.5Q0.3 11.5 0.3 8.3Q0.3 5.3 3.6 5Q4.6 0.8 8.6 0.8Q12.2 0.8 13.2 4.3Q16.7 4.8 16.7 8.2Q16.7 11.5 13.3 11.5Z" fill="#1a6fcc"/><path d="M4 11.5Q0.3 11.5 0.3 8.3Q0.3 6.8 1.5 6Q5 5.5 8 8Q11 6.5 16.5 7.5Q16.7 8 16.7 8.2Q16.7 11.5 13.3 11.5Z" fill="#2e92ea"/></svg>
<svg style="left:493px;top:557px" width="16" height="16" viewBox="0 0 16 16"><defs><linearGradient id="pal" x1="0" y1="0" x2="0" y2="1"><stop offset="0" stop-color="#3ab4ee"/><stop offset="1" stop-color="#1a7ed8"/></linearGradient></defs><path d="M8.5 0.8Q14.5 0.8 15 5.5Q15.5 10 13.5 13Q11.8 15.3 9.5 14.8Q8 14.4 7.6 12.4Q7.2 11 5.6 11.8Q1.2 13 0.6 9Q0.2 4.5 3 2.6Q5.2 0.8 8.5 0.8Z" fill="url(#pal)"/><circle cx="7.8" cy="8.8" r="1.1" fill="#f4f8fc"/><ellipse cx="2.4" cy="7.6" rx="1.2" ry="0.9" fill="#3a4a5a"/><circle cx="4.4" cy="4.8" r="1.2" fill="#0a8a80"/><circle cx="7.5" cy="2.8" r="1" fill="#8ad060"/><rect x="10.8" y="5.8" width="2.4" height="9.8" fill="#8a5a20"/><rect x="10.8" y="4.4" width="2.4" height="2.2" fill="#d8c8a0"/></svg>
<svg style="left:494px;top:599px" width="14" height="14" viewBox="0 0 14 14"><path d="M6 0.6H2.6A2 2 0 0 0 0.6 2.6V11.4A2 2 0 0 0 2.6 13.4H11.4A2 2 0 0 0 13.4 11.4V8" fill="none" stroke="#5a5a5a" stroke-width="1.1"/><path d="M8.5 0.6H13.4V5.5M13.4 0.6L7 7" fill="none" stroke="#1f72c4" stroke-width="1.1"/><path d="M0.6 7.5H6.5V13.4" fill="none" stroke="#5a5a5a" stroke-width="1.1"/></svg>
<svg style="left:715px;top:328px" width="72" height="48" viewBox="0 0 72 48"><path d="M63.4 43.2L24 17" stroke="#e81c1c" stroke-width="4.2"/><path d="M6.3 6.5L34.9 9.2L21.2 30.3Z" fill="#e81c1c" stroke="#e81c1c" stroke-width="0.6" stroke-linejoin="round"/></svg>


<!-- status bar cover -->
<div class="a" style="left:0;top:697px;width:1023px;height:23px;background:#fff"></div>
<div class="a" style="left:68px;top:701px;width:1px;height:16px;background:#ececec"></div>
<div class="a" style="left:211px;top:701px;width:1px;height:16px;background:#ececec"></div>
<div class="t" style="left:14px;top:699px;font-size:11.5px">15 items</div>
<div class="t" style="left:80px;top:699px;font-size:11.5px">1 item selected&nbsp; 0 bytes</div>
<!-- taskbar -->
<div class="a" style="left:0;top:720px;width:1023px;height:48px;background:#eeeeee;border-top:1px solid #d4d4d4"></div>
<svg style="left:20px;top:726px" width="28" height="30" viewBox="0 0 28 30"><defs><linearGradient id="cr" x1="0" y1="0" x2="0" y2="1"><stop offset="0" stop-color="#f2b22a"/><stop offset="1" stop-color="#f07a10"/></linearGradient></defs><path d="M1 19.5Q6 22 12 19Q18 16 21 11Q24 15 22 21Q19 28.5 11 28.5Q4 28.5 1 19.5Z" fill="url(#cr)"/><circle cx="19" cy="9" r="7.9" fill="#c42b1c"/><path d="M19.6 4.8V13M19.6 4.8L17.6 6.6" fill="none" stroke="#fff" stroke-width="1.3"/></svg>
<svg style="left:234px;top:733px" width="23" height="23" viewBox="0 0 23 23"><defs><linearGradient id="wl" x1="0" y1="0" x2="1" y2="1"><stop offset="0" stop-color="#38b6f2"/><stop offset="1" stop-color="#0a6ad0"/></linearGradient></defs><path d="M0 0H11V11H0ZM12 0H23V11H12ZM0 12H11V23H0ZM12 12H23V23H12Z" fill="url(#wl)"/></svg>
<div class="a" style="left:270px;top:728px;width:219px;height:32px;background:#fafafa;border:1px solid #dcdcdc;border-radius:16px"></div>
<svg style="left:282px;top:737px" width="15" height="15" viewBox="0 0 15 15"><circle cx="6" cy="6" r="5" fill="none" stroke="#1a1a1a" stroke-width="1.6"/><path d="M9.7 9.7L14 14" stroke="#1a1a1a" stroke-width="1.8" stroke-linecap="round"/></svg>
<div class="t" style="left:307px;top:734px;font-size:13px;color:#5a5a5a;-webkit-text-stroke:0">Search</div>
<svg style="left:440px;top:731px" width="45" height="27" viewBox="0 0 45 27"><ellipse cx="23" cy="23.5" rx="21" ry="2.3" fill="#d9b97c" opacity="0.75"/><path d="M2.5 9.5L8.5 2L13 4.5L16 7.5Q24 6.5 33 7.5Q36 9 35.5 12Q35 16 31 17H16Q14 16 13 13L9 11L4 12.5Z" fill="#e4e4ee" stroke="#9898b0" stroke-width="0.6"/><path d="M15 15H16.8V24.5H15ZM18.5 15H20.3V24H18.5ZM29 14.5H30.8V24.5H29ZM32 14H33.8V24H32Z" fill="#d8d8e2"/><path d="M2.5 10.5L4.5 12.5" stroke="#222" stroke-width="1.6"/><path d="M9 2Q14 3.5 17.5 8" fill="none" stroke="#2a2a5c" stroke-width="2"/><path d="M13 6L12 10M15 8L14 13M18 8L18.5 15M21 8L21.5 15.5M24 7.5L24 16M27 7.5L27.5 16M30 8L30 15M33 9L32.5 14" stroke="#34346a" stroke-width="1"/><path d="M34.5 9Q37 13 40 19" fill="none" stroke="#2e2e60" stroke-width="1.6"/></svg>
<svg style="left:502px;top:733px" width="24" height="22" viewBox="0 0 24 22"><rect x="6" y="0" width="17.5" height="15.5" rx="1" fill="#fafafa" stroke="#e2e2e2" stroke-width="0.6"/><rect x="0" y="6" width="18" height="16" rx="1.2" fill="#1c1c1c"/><rect x="6" y="6" width="12" height="9.5" fill="#c2c2c2"/></svg>
<svg style="left:546px;top:733px" width="24" height="22" viewBox="0 0 24 22"><defs><linearGradient id="cp1" x1="0" y1="0" x2="0" y2="1"><stop offset="0" stop-color="#1aa0f0"/><stop offset="0.55" stop-color="#30b070"/><stop offset="1" stop-color="#f0c818"/></linearGradient><linearGradient id="cp2" x1="0" y1="0" x2="0" y2="1"><stop offset="0" stop-color="#b048e0"/><stop offset="0.5" stop-color="#f05a90"/><stop offset="1" stop-color="#f89a40"/></linearGradient></defs><path d="M5 1H15Q18 1 17.5 4L15 12Q14 15.5 11 15.5H3Q0.5 15.5 1 12.5L3 4Q3.8 1 5 1Z" fill="url(#cp1)"/><path d="M13 1H15Q18 1 17.5 4L17 6H12Z" fill="#1840c8"/><path d="M9 6H20.5Q23.5 6 23 9L21 18Q20 21 17 21H9Q6 21 6.8 18L9 9Z" fill="url(#cp2)"/><path d="M6 15.5L9 21Q6.5 21 6 18Z" fill="#e84a20"/><path d="M11.5 7.5L9.5 14.5" stroke="#fff" stroke-width="1.6"/></svg>
<div class="a" style="left:583px;top:725px;width:38px;height:39px;background:#f7f7f7;border:1px solid #e4e4e4;border-radius:5px"></div>
<svg style="left:589px;top:732px" width="25" height="23" viewBox="0 0 25 23"><path d="M0 2Q0 0 2 0H9L11 2.5H23Q25 2.5 25 4.5V6H0Z" fill="#e8a820"/><path d="M0 5H25V21Q25 23 23 23H2Q0 23 0 21Z" fill="#fbd350"/><rect x="6" y="14" width="13" height="9" rx="2" fill="#1a74c8"/><rect x="6" y="18" width="13" height="5" fill="#125ba6"/></svg>
<div class="a" style="left:594px;top:760px;width:16px;height:3px;background:#0067c0;border-radius:2px"></div>
<svg style="left:634px;top:732px" width="24" height="24" viewBox="0 0 24 24"><defs><linearGradient id="ed1" x1="0" y1="0" x2="1" y2="0.6"><stop offset="0" stop-color="#1aa6e8"/><stop offset="0.5" stop-color="#2ec0b0"/><stop offset="1" stop-color="#5ad84a"/></linearGradient><linearGradient id="ed2" x1="0" y1="0" x2="0.6" y2="1"><stop offset="0" stop-color="#1a8ae0"/><stop offset="1" stop-color="#0b4aa0"/></linearGradient></defs><circle cx="12" cy="12" r="12" fill="url(#ed1)"/><path d="M9.5 12.5Q9.5 9.3 12.5 9.3Q14.8 9.5 15 12Q15.2 14.5 18 15.5Q20.5 16.2 23.5 15.5Q22 19 19 20Q15 21 12.5 19.5Q9.5 17.5 9.5 12.5Z" fill="#f2f6f8"/><path d="M0.2 11.5Q0.5 24 12 24Q18 24 22 19.5Q17.5 21.3 13.5 19.5Q8.8 17.5 9 12.5Q9.3 8.3 13.5 8Q10 6 5.5 7.2Q1 8.8 0.2 11.5Z" fill="url(#ed2)"/></svg>
<svg style="left:678px;top:732px" width="24" height="24" viewBox="0 0 24 24"><path d="M7 6V4Q7 1 12 1Q17 1 17 4V6" fill="none" stroke="#2a9ae8" stroke-width="1.6"/><rect x="0" y="6" width="24" height="18" rx="3" fill="#1a4a8a"/><rect x="7" y="10" width="4.5" height="4.5" fill="#f25022"/><rect x="12.5" y="10" width="4.5" height="4.5" fill="#7fba00"/><rect x="7" y="15.5" width="4.5" height="4.5" fill="#00a4ef"/><rect x="12.5" y="15.5" width="4.5" height="4.5" fill="#ffb900"/></svg>
<svg style="left:781px;top:741px" width="11" height="7" viewBox="0 0 11 7"><path d="M0.7 6.3L5.5 1L10.3 6.3" fill="none" stroke="#1a1a1a" stroke-width="1.2"/></svg>
<svg style="left:809px;top:738px" width="18" height="12" viewBox="0 0 18 12"><path d="M4 11.3Q0.7 11.3 0.7 8.3Q0.7 5.4 3.9 5.1Q4.8 0.9 8.8 0.9Q12.3 0.9 13.3 4.4Q17.3 4.9 17.3 8.2Q17.3 11.3 14 11.3Z" fill="#bdbdbd" stroke="#3a3a3a" stroke-width="1.2"/><path d="M1.5 9.5Q6 6.5 10 8.5Q14 6.5 16.8 8.5" fill="none" stroke="#3a3a3a" stroke-width="0.9"/></svg>
<div class="t" style="left:845px;top:727px;font-size:11.5px;color:#1a1a1a">ENG</div>
<div class="t" style="left:850px;top:742px;font-size:11.5px;color:#1a1a1a">IN</div>
<svg style="left:886px;top:735px" width="17" height="17" viewBox="0 0 17 17"><path d="M10 2H1.2V12.5H13V9" fill="none" stroke="#1a1a1a" stroke-width="1.2"/><path d="M7 12.5V15.5M3.5 15.5H10.5" stroke="#1a1a1a" stroke-width="1.2"/><rect x="11.5" y="1" width="4" height="5" rx="1" fill="none" stroke="#1a1a1a" stroke-width="1"/><path d="M13.5 6V10" stroke="#1a1a1a" stroke-width="1"/></svg>
<svg style="left:910px;top:738px" width="17" height="13" viewBox="0 0 17 13"><path d="M0.6 4.3H3.3L7 1V12L3.3 8.7H0.6Z" fill="none" stroke="#1a1a1a" stroke-width="1.1" stroke-linejoin="round"/><path d="M9.3 4.3Q10.5 6.5 9.3 8.7M11.5 2.7Q13.5 6.5 11.5 10.3M13.8 1Q16.5 6.5 13.8 12" fill="none" stroke="#1a1a1a" stroke-width="1.1"/></svg>
<div class="t" style="left:904px;top:726px;width:100px;text-align:right;font-size:12px;color:#1a1a1a">00:18</div>
<div class="t" style="left:904px;top:742px;width:100px;text-align:right;font-size:12px;color:#1a1a1a">31-01-2025</div>
</body></html>
